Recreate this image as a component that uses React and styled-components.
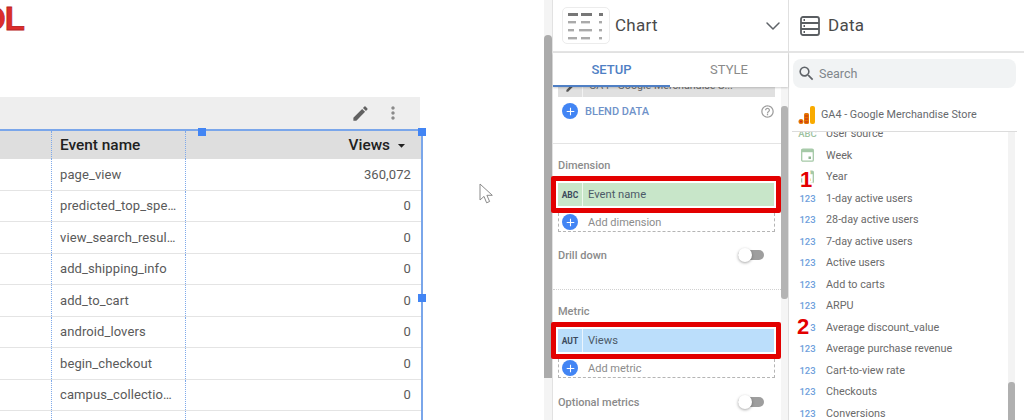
import React from "react";
import styled, { createGlobalStyle } from "styled-components";
import { MdEdit, MdMoreVert, MdSearch, MdHelpOutline, MdAdd, MdArrowDropDown } from "react-icons/md";
import { FiChevronDown } from "react-icons/fi";

const events = [
  ["page_view", "360,072"],
  ["predicted_top_spe…", "0"],
  ["view_search_resul…", "0"],
  ["add_shipping_info", "0"],
  ["add_to_cart", "0"],
  ["android_lovers", "0"],
  ["begin_checkout", "0"],
  ["campus_collectio…", "0"],
  ["", ""],
];

const fields = [
  ["abc", "User source"],
  ["date", "Week"],
  ["date", "Year"],
  ["num", "1-day active users"],
  ["num", "28-day active users"],
  ["num", "7-day active users"],
  ["num", "Active users"],
  ["num", "Add to carts"],
  ["num", "ARPU"],
  ["num", "Average discount_value"],
  ["num", "Average purchase revenue"],
  ["num", "Cart-to-view rate"],
  ["num", "Checkouts"],
  ["num", "Conversions"],
];

const ChartIcon = () => (
  <svg width="36" height="28" viewBox="0 0 36 28">
    <rect x="0" y="1" width="10" height="3" fill="#777" />
    <rect x="13" y="1" width="11" height="3" fill="#777" />
    <rect x="31" y="1" width="4" height="3" fill="#777" />
    <rect x="0" y="9" width="8" height="2.4" fill="#aaa" />
    <rect x="13" y="9" width="9" height="2.4" fill="#aaa" />
    <rect x="31" y="9" width="3" height="2.4" fill="#aaa" />
    <rect x="0" y="17" width="6" height="2.4" fill="#aaa" />
    <rect x="11" y="17" width="13" height="2.4" fill="#aaa" />
    <rect x="31" y="17" width="3" height="2.4" fill="#aaa" />
    <rect x="0" y="25" width="9" height="2.4" fill="#aaa" />
    <rect x="13" y="25" width="9" height="2.4" fill="#aaa" />
    <rect x="31" y="25" width="3" height="2.4" fill="#aaa" />
  </svg>
);

const DataIcon = () => (
  <svg width="20" height="20" viewBox="0 0 20 20" fill="none" stroke="#5a5e62" strokeWidth="1.8">
    <rect x="1" y="1" width="18" height="18" rx="2" />
    <path d="M1 7h18M1 13h18" />
    <path d="M3.5 4h1.5M3.5 10h1.5M3.5 16h1.5" />
  </svg>
);

const AnalyticsLogo = () => (
  <svg width="18" height="20" viewBox="0 0 18 20">
    <rect x="12" y="1" width="5" height="18" rx="2" fill="#f9ab00" />
    <rect x="6" y="8" width="5" height="11" rx="1.5" fill="#e37400" />
    <circle cx="3" cy="16.5" r="2.5" fill="#e37400" />
    <circle cx="3" cy="16.5" r="1" fill="#c5221f" />
    <path d="M7 11h3M7 14h3M7 17h3" stroke="#c5221f" strokeWidth="1" />
  </svg>
);

const CalendarIcon = () => (
  <svg width="13" height="14" viewBox="0 0 13 14" fill="none">
    <rect x="0.7" y="1.2" width="11.6" height="12" rx="1.2" stroke="#a5c9a7" strokeWidth="1.3" />
    <rect x="0.7" y="1.2" width="11.6" height="3" fill="#a5c9a7" />
    <rect x="7.5" y="8.5" width="2.5" height="2.5" fill="#8fb591" />
  </svg>
);

const Pointer = () => (
  <svg width="15" height="22" viewBox="0 0 15 22" fill="#fff" stroke="#8a8a8a" strokeWidth="1">
    <path d="M1 1v16l4-3.6 2.6 6.4 3-1.3-2.7-6.2h5.4z" />
  </svg>
);

const Toggle = () => (
  <ToggleTrack>
    <ToggleKnob />
  </ToggleTrack>
);

const AddRow = ({ label }) => (
  <AddBox>
    <PlusCircle>
      <MdAdd size={13} />
    </PlusCircle>
    {label}
  </AddBox>
);

const Highlighted = ({ tag, label, color }) => (
  <RedBox>
    <Chip $color={color}>
      <ChipTag>{tag}</ChipTag>
      <ChipLabel>{label}</ChipLabel>
    </Chip>
  </RedBox>
);

const FieldIcon = ({ type }) => {
  if (type === "date") return <CalendarIcon />;
  return <NumTag $type={type}>{type === "abc" ? "ABC" : "123"}</NumTag>;
};

const App = () => {
  return (
    <Page>
      <GlobalStyle />
      <Canvas>
        <Logo>OL</Logo>
        <ReportTable>
          <Toolbar>
            <MdEdit size={19} color="#616161" />
            <MdMoreVert size={20} color="#8a8a8a" />
          </Toolbar>
          <TableBody>
            <HeadRow>
              <span />
              <HeadCell>Event name</HeadCell>
              <HeadValue>
                Views
                <MdArrowDropDown size={17} />
              </HeadValue>
            </HeadRow>
            {events.map(([name, value], i) => (
              <Row key={i}>
                <span />
                <Cell>{name}</Cell>
                <ValueCell>{value}</ValueCell>
              </Row>
            ))}
            <Handle $left="198px" $top="-3px" />
            <Handle $left="418px" $top="-3px" />
            <Handle $left="418px" $top="163px" />
          </TableBody>
        </ReportTable>
        <CursorMark>
          <Pointer />
        </CursorMark>
      </Canvas>

      <Gutter>
        <GutterThumb />
      </Gutter>

      <ChartPanel>
        <PanelHeader>
          <ChartIconBox>
            <ChartIcon />
          </ChartIconBox>
          <PanelTitle>Chart</PanelTitle>
          <Chevron>
            <FiChevronDown size={24} strokeWidth={1.5} color="#5f6368" />
          </Chevron>
        </PanelHeader>
        <Tabs>
          <Tab $active>SETUP</Tab>
          <Tab>STYLE</Tab>
        </Tabs>
        <PanelBody>
          <PanelContent>
            <SourceRow>
              <SourceTag>
                <MdEdit size={11} color="#555" />
              </SourceTag>
              <SourceText>GA4 - Google Merchandise S...</SourceText>
            </SourceRow>
            <BlendRow>
              <PlusCircle>
                <MdAdd size={13} />
              </PlusCircle>
              <BlendText>BLEND DATA</BlendText>
              <MdHelpOutline size={15} color="#9e9e9e" />
            </BlendRow>
            <Divider />
            <SectionLabel>Dimension</SectionLabel>
            <Highlighted tag="ABC" label="Event name" color="#c8e6c9" />
            <AddRow label="Add dimension" />
            <ToggleRow $top="11px">
              Drill down
              <Toggle />
            </ToggleRow>
            <Divider $dashed $top="22px" />
            <SectionLabel>Metric</SectionLabel>
            <Highlighted tag="AUT" label="Views" color="#bbdefb" />
            <AddRow label="Add metric" />
            <ToggleRow $top="12px">
              Optional metrics
              <Toggle />
            </ToggleRow>
          </PanelContent>
          <InnerTrack>
            <InnerThumb />
          </InnerTrack>
        </PanelBody>
      </ChartPanel>

      <DataPanel>
        <PanelHeader>
          <DataIconSlot>
            <DataIcon />
          </DataIconSlot>
          <PanelTitle>Data</PanelTitle>
        </PanelHeader>
        <SearchBox>
          <MdSearch size={19} color="#5f6368" />
          Search
        </SearchBox>
        <SourceName>
          <AnalyticsLogo />
          GA4 - Google Merchandise Store
        </SourceName>
        <FieldArea>
          <FieldList>
            {fields.map(([type, name]) => (
              <FieldRow key={name}>
                <FieldIconSlot>
                  <FieldIcon type={type} />
                </FieldIconSlot>
                {name}
              </FieldRow>
            ))}
          </FieldList>
          <FieldTrack>
            <FieldThumb />
          </FieldTrack>
        </FieldArea>
        <StepNumber $left="11px" $top="168px">1</StepNumber>
        <StepNumber $left="8px" $top="315px">2</StepNumber>
      </DataPanel>
    </Page>
  );
};

const GlobalStyle = createGlobalStyle`
  html, body {
    margin: 0;
    padding: 0;
    background: #fff;
  }
  * {
    box-sizing: border-box;
  }
`;

const Page = styled.div`
  display: flex;
  width: 1024px;
  height: 420px;
  overflow: hidden;
  background: #fff;
  font-family: Roboto, "Liberation Sans", sans-serif;
  color: #5f6368;
`;

const Canvas = styled.div`
  position: relative;
  flex: 0 0 544px;
  height: 420px;
  overflow: hidden;
`;

const Logo = styled.div`
  height: 97px;
  margin-left: -20px;
  padding-top: 2px;
  font-family: "Liberation Sans", sans-serif;
  font-size: 33px;
  font-weight: 700;
  line-height: 34px;
  letter-spacing: -1px;
  color: #dd2c2c;
  -webkit-text-stroke: 0.8px #b92525;
`;

const ReportTable = styled.div`
  width: 423px;
`;

const Toolbar = styled.div`
  display: flex;
  align-items: center;
  justify-content: flex-end;
  gap: 13px;
  height: 32px;
  margin-right: 3px;
  padding-right: 17px;
  background: #eeeeee;
`;

const TableBody = styled.div`
  position: relative;
  border-top: 2px solid #7aa6ea;
  border-right: 2px solid #7aa6ea;
`;

const Row = styled.div`
  display: grid;
  grid-template-columns: 51px 135px 1fr;
  height: 31.5px;
  border-bottom: 1px solid #e4e4e4;
  font-size: 13px;
  letter-spacing: 0.1px;
  color: #5a5a5a;
`;

const HeadRow = styled(Row)`
  height: 28px;
  border-bottom: 0;
  background: #dedede;
  font-size: 15.4px;
  font-weight: 500;
  letter-spacing: 0;
  color: #212121;
`;

const Cell = styled.div`
  display: flex;
  align-items: center;
  padding-left: 8px;
  border-left: 1px dotted #7ea9ea;
  border-right: 1px dotted #7ea9ea;
  white-space: nowrap;
`;

const HeadCell = styled(Cell)``;

const ValueCell = styled.div`
  display: flex;
  align-items: center;
  justify-content: flex-end;
  padding-right: 10px;
`;

const HeadValue = styled(ValueCell)`
  padding-right: 11px;
  gap: 3px;
`;

const Handle = styled.i`
  position: absolute;
  left: ${(p) => p.$left};
  top: ${(p) => p.$top};
  width: 8px;
  height: 8px;
  background: #4285f4;
`;

const CursorMark = styled.div`
  position: absolute;
  left: 479px;
  top: 183px;
`;

const Gutter = styled.div`
  flex: 0 0 8px;
  padding-top: 35px;
  background: #f4f4f4;
`;

const GutterThumb = styled.div`
  height: 343px;
  border-radius: 4px 4px 0 0;
  background: #ababab;
`;

const ChartPanel = styled.div`
  display: flex;
  flex-direction: column;
  flex: 0 0 236px;
  height: 420px;
  border-left: 1px solid #e2e2e2;
  border-right: 1px solid #e0e0e0;
`;

const PanelHeader = styled.div`
  display: flex;
  align-items: center;
  flex: 0 0 53px;
  border-bottom: 2px solid #e4e4e4;
`;

const ChartIconBox = styled.div`
  display: flex;
  align-items: center;
  justify-content: center;
  width: 48px;
  height: 37px;
  margin: 0 5px 0 9px;
  border: 1px solid #ececec;
  border-radius: 5px;
`;

const PanelTitle = styled.div`
  padding-bottom: 1px;
  font-size: 17px;
  letter-spacing: 0.3px;
  color: #4a4a4a;
`;

const Chevron = styled.div`
  display: flex;
  margin-left: auto;
  margin-right: 3px;
`;

const Tabs = styled.div`
  display: grid;
  grid-template-columns: 117px 1fr;
  flex: 0 0 34px;
  box-shadow: 0 1px 2px rgba(0, 0, 0, 0.18);
  z-index: 1;
  background: #fff;
`;

const Tab = styled.div`
  display: flex;
  align-items: center;
  justify-content: center;
  font-size: 13px;
  font-weight: ${(p) => (p.$active ? 500 : 400)};
  color: ${(p) => (p.$active ? "#4f7fc4" : "#8a8a8a")};
  border-bottom: 2px solid ${(p) => (p.$active ? "#4f7fc4" : "transparent")};
`;

const PanelBody = styled.div`
  display: flex;
  flex: 1;
  min-height: 0;
`;

const PanelContent = styled.div`
  flex: 1;
  min-width: 0;
`;

const SourceRow = styled.div`
  display: flex;
  height: 10px;
  margin: 0 6px 0 5px;
  overflow: hidden;
  background: #e0e0e0;
`;

const SourceTag = styled.div`
  display: flex;
  justify-content: center;
  flex: 0 0 25px;
  margin-top: -5px;
  border-right: 1px solid #f2f2f2;
`;

const SourceText = styled.div`
  margin-top: -9px;
  padding-left: 6px;
  font-size: 10.7px;
  line-height: 16px;
  color: #6a6a6a;
`;

const PlusCircle = styled.span`
  display: flex;
  align-items: center;
  justify-content: center;
  flex: 0 0 16px;
  height: 16px;
  border-radius: 50%;
  background: #4285f4;
  color: #fff;
`;

const BlendRow = styled.div`
  display: flex;
  align-items: center;
  height: 28px;
  padding: 0 6px 0 9px;
`;

const BlendText = styled.span`
  flex: 1;
  margin-left: 7px;
  font-size: 11px;
  font-weight: 500;
  color: #6f92c9;
`;

const Divider = styled.div`
  margin-top: ${(p) => p.$top || "18px"};
  border-top: 1px ${(p) => (p.$dashed ? "dotted #d0d0d0" : "solid #e4e4e4")};
`;

const SectionLabel = styled.div`
  height: 16px;
  margin: 14px 0 2px 5px;
  font-size: 11px;
  font-weight: 500;
  line-height: 16px;
  color: #8c8c8c;
`;

const RedBox = styled.div`
  position: relative;
  z-index: 1;
  width: 230px;
  height: 37px;
  margin-left: -2px;
  padding: 2px;
  border: 5px solid #e30000;
  border-radius: 2px;
`;

const Chip = styled.div`
  display: flex;
  align-items: center;
  height: 100%;
  background: ${(p) => p.$color};
`;

const ChipTag = styled.span`
  display: flex;
  align-items: center;
  justify-content: center;
  flex: 0 0 25px;
  height: 100%;
  border-right: 1px solid rgba(255, 255, 255, 0.7);
  font-size: 8.5px;
  font-weight: 700;
  color: #3c4a5c;
`;

const ChipLabel = styled.span`
  padding-left: 5px;
  font-size: 11.2px;
  color: #4c5a68;
`;

const AddBox = styled.div`
  display: flex;
  align-items: center;
  gap: 10px;
  height: 19px;
  margin: 0 6px 0 5px;
  padding-left: 3px;
  border: 1px dashed #b5b5b5;
  border-top: 0;
  font-size: 11px;
  color: #8c8c8c;
`;

const ToggleRow = styled.div`
  display: flex;
  align-items: center;
  justify-content: space-between;
  height: 24px;
  margin-top: ${(p) => p.$top};
  padding: 0 17px 0 5px;
  font-size: 11px;
  font-weight: 500;
  color: #8a8a8a;
`;

const ToggleTrack = styled.span`
  position: relative;
  width: 26px;
  height: 10px;
  border-radius: 5px;
  background: #9e9e9e;
`;

const ToggleKnob = styled.span`
  position: absolute;
  left: 0;
  top: -2px;
  width: 14px;
  height: 14px;
  border-radius: 50%;
  background: #fff;
  box-shadow: 0 1px 3px rgba(0, 0, 0, 0.35);
`;

const InnerTrack = styled.div`
  flex: 0 0 7px;
  padding-top: 19px;
  background: #f5f5f5;
`;

const InnerThumb = styled.div`
  height: 193px;
  border-radius: 3px;
  background: #b4b4b4;
`;

const DataPanel = styled.div`
  position: relative;
  display: flex;
  flex-direction: column;
  flex: 1;
  min-width: 0;
  height: 420px;
`;

const DataIconSlot = styled.div`
  display: flex;
  margin: 0 8px 0 11px;
`;

const SearchBox = styled.div`
  display: flex;
  align-items: center;
  gap: 3px;
  flex: 0 0 29px;
  margin: 6px 8px 0 4px;
  padding-left: 4px;
  border-radius: 8px;
  background: #f1f3f4;
  font-size: 12.5px;
  color: #80868b;
`;

const SourceName = styled.div`
  display: flex;
  align-items: center;
  gap: 5px;
  flex: 0 0 44px;
  margin: 0 7px 0 3px;
  padding: 10px 0 0 6px;
  border-bottom: 1px solid #dcdcdc;
  font-size: 10.8px;
  color: #66696d;
`;

const FieldArea = styled.div`
  display: flex;
  flex: 1;
  min-height: 0;
  overflow: hidden;
`;

const FieldList = styled.div`
  flex: 1;
  min-width: 0;
  margin-top: -9px;
`;

const FieldRow = styled.div`
  display: flex;
  align-items: center;
  height: 21.5px;
  font-size: 10.8px;
  color: #6a6a6a;
`;

const FieldIconSlot = styled.span`
  display: flex;
  align-items: center;
  justify-content: center;
  flex: 0 0 37px;
`;

const NumTag = styled.span`
  font-size: 9.5px;
  font-weight: 500;
  color: ${(p) => (p.$type === "abc" ? "#9ec29f" : "#6ea0dc")};
`;

const FieldTrack = styled.div`
  flex: 0 0 7px;
  margin-right: 9px;
  padding-top: 250px;
  background: #f3f3f3;
`;

const FieldThumb = styled.div`
  height: 60px;
  border-radius: 3px;
  background: #b0b0b0;
`;

const StepNumber = styled.div`
  position: absolute;
  left: ${(p) => p.$left};
  top: ${(p) => p.$top};
  font-family: "Liberation Sans", sans-serif;
  font-size: 22px;
  font-weight: 700;
  line-height: 24px;
  color: #e30000;
  text-shadow: 2px 0 0 #fff, -2px 0 0 #fff, 0 2px 0 #fff, 0 -2px 0 #fff, 2px 2px 0 #fff, -2px 2px 0 #fff, 2px -2px 0 #fff, -2px -2px 0 #fff;
`;

export default App;
